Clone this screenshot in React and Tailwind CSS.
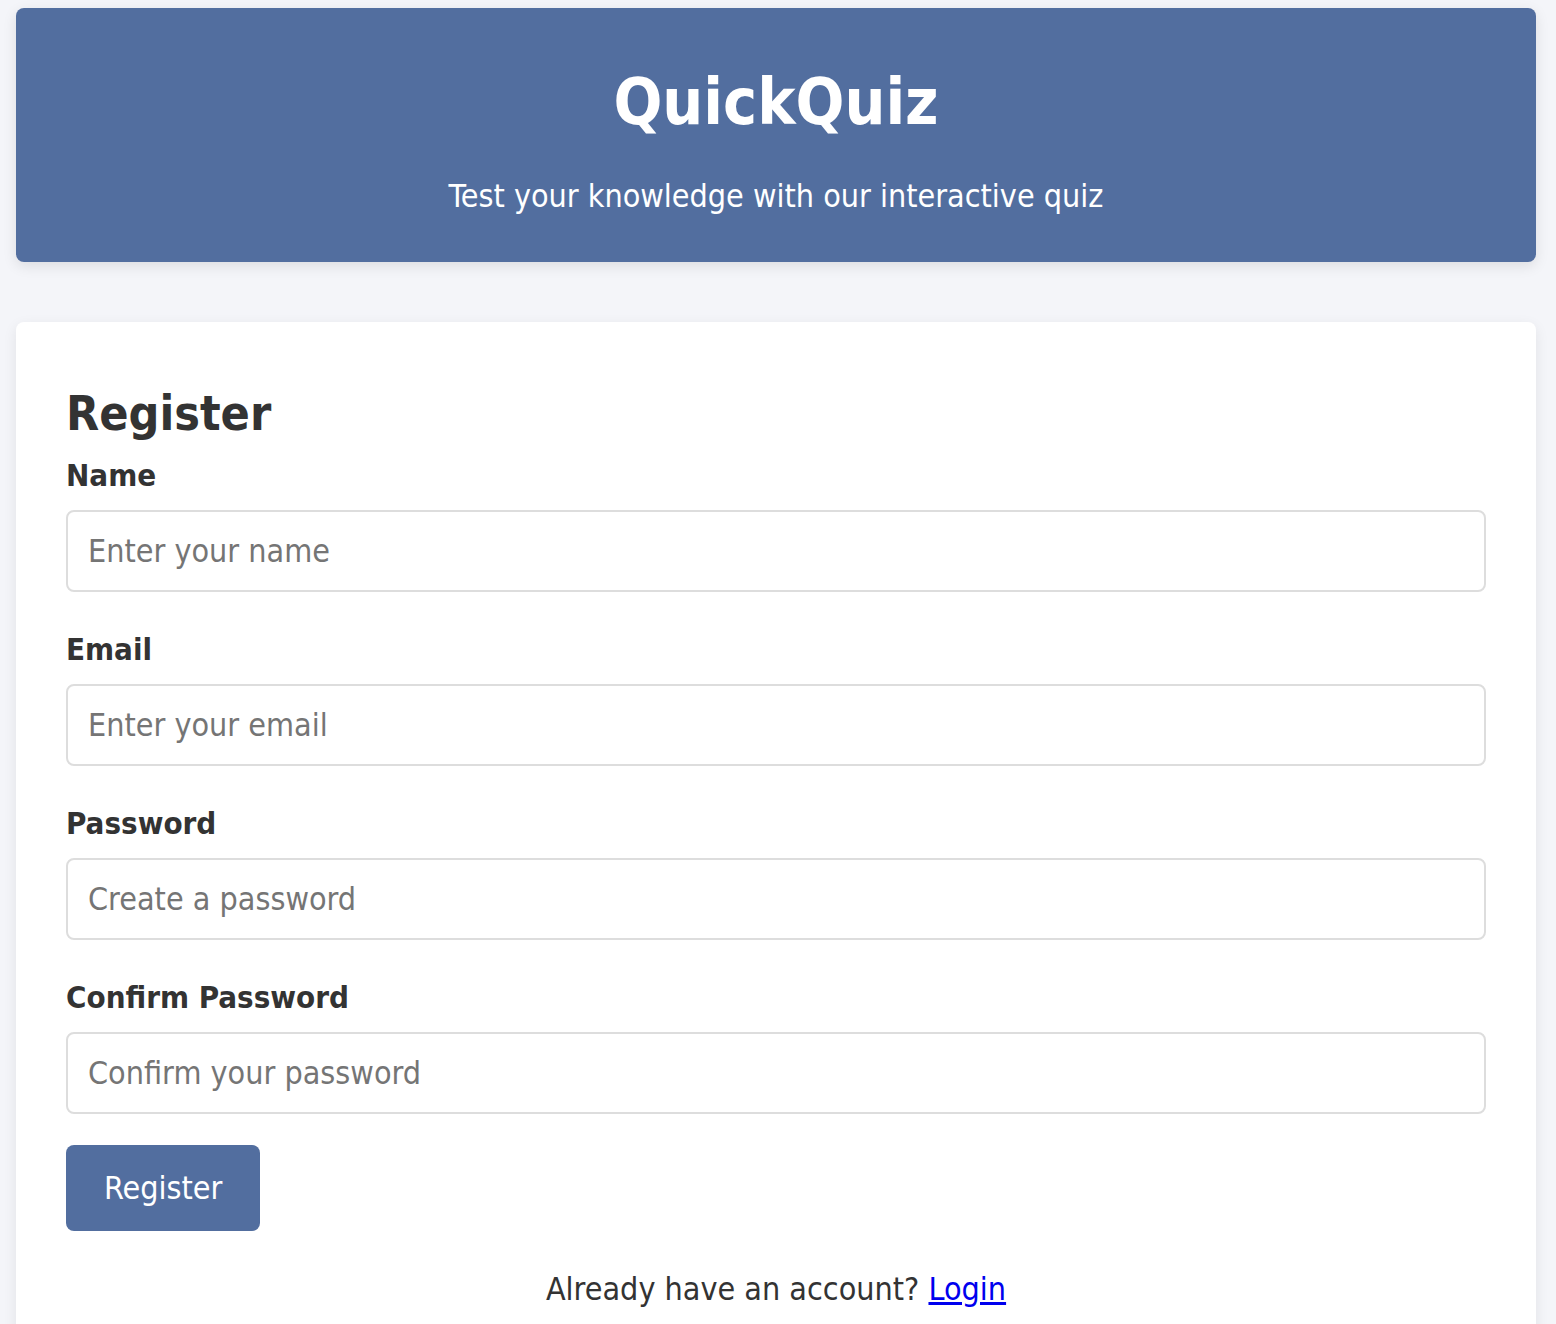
import React, { useState } from 'react';

const fields = [
  { name: 'name', label: 'Name', type: 'text', placeholder: 'Enter your name' },
  { name: 'email', label: 'Email', type: 'email', placeholder: 'Enter your email' },
  { name: 'password', label: 'Password', type: 'password', placeholder: 'Create a password' },
  { name: 'confirm', label: 'Confirm Password', type: 'password', placeholder: 'Confirm your password' },
];

const App = () => {
  const [formData, setFormData] = useState({ name: '', email: '', password: '', confirm: '' });

  const handleChange = (e) => {
    setFormData({ ...formData, [e.target.name]: e.target.value });
  };

  return (
    <div className="min-h-screen bg-[#f4f5f9] pl-[16px] pr-[20px] pt-[8px] pb-[40px] text-[#333] font-['DejaVu_Sans_Condensed','DejaVu_Sans',sans-serif]">
      <header className="rounded-[8px] bg-[#526e9f] pt-[56px] pb-[46px] text-center text-white shadow-[0_4px_14px_rgba(0,0,0,0.10)]">
        <h1 className="text-[64px] font-bold leading-[76px]">QuickQuiz</h1>
        <p className="mt-[36px] text-[32px] leading-[40px]">Test your knowledge with our interactive quiz</p>
      </header>

      <main className="mt-[60px] rounded-[8px] bg-white px-[50px] pt-[63px] pb-[40px] shadow-[0_4px_14px_rgba(0,0,0,0.08)]">
        <h2 className="text-[48px] font-bold leading-[56px]">Register</h2>

        <form onSubmit={(e) => e.preventDefault()} className="mt-[17px]">
          {fields.map((f, i) => (
            <div key={f.name} className={i === fields.length - 1 ? 'mb-[31px]' : 'mb-[40px]'}>
              <label htmlFor={f.name} className="mb-[18px] block text-[31px] font-bold leading-[34px]">
                {f.label}
              </label>
              <input
                id={f.name}
                name={f.name}
                type={f.type}
                value={formData[f.name]}
                onChange={handleChange}
                placeholder={f.placeholder}
                className="block h-[82px] w-full rounded-[8px] border-2 border-[#dddddd] px-[20px] text-[32px] text-[#333] placeholder:text-[#757575] focus:outline-none"
              />
            </div>
          ))}

          <button
            type="submit"
            className="block h-[86px] rounded-[8px] bg-[#526e9f] px-[38px] text-[32px] text-white"
          >
            Register
          </button>
        </form>

        <p className="mt-[38px] text-center text-[32px] leading-[40px]">
          Already have an account?{' '}
          <a href="#" className="text-[#0000ee] underline">Login</a>
        </p>
      </main>
    </div>
  );
};

export default App;
